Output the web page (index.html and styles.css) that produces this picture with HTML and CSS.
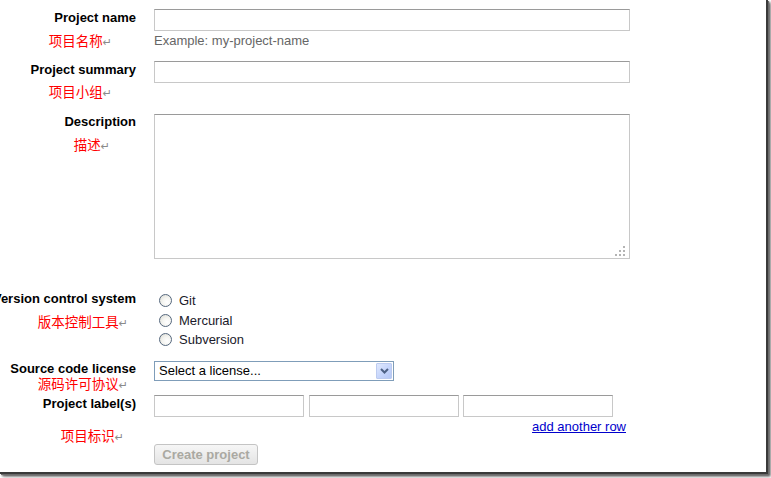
FILE: index.html
```html
<!DOCTYPE html>
<html>
<head>
<meta charset="utf-8">
<link rel="stylesheet" href="styles.css">
</head>
<body>
<div class="frame">
  <form class="form">
    <div class="row row-name">
      <div class="label-cell">
        <span class="label">Project name</span>
        <span class="note note-r24 note-t7">项目名称<span class="mark">↵</span></span>
      </div>
      <div class="field-cell">
        <input class="text wide" type="text">
        <div class="hint">Example: my-project-name</div>
      </div>
    </div>

    <div class="row row-summary">
      <div class="label-cell">
        <span class="label">Project summary</span>
        <span class="note note-r24 note-t6">项目小组<span class="mark">↵</span></span>
      </div>
      <div class="field-cell">
        <input class="text wide" type="text">
      </div>
    </div>

    <div class="row row-desc">
      <div class="label-cell">
        <span class="label label-flush">Description</span>
        <span class="note note-r26 note-t7">描述<span class="mark">↵</span></span>
      </div>
      <div class="field-cell">
        <div class="area-wrap">
          <textarea class="area"></textarea>
          <svg class="grip" width="11" height="11" viewBox="0 0 11 11">
            <rect x="8" y="0" width="2" height="2" fill="#b4b4b4"/>
            <rect x="4" y="4" width="2" height="2" fill="#b4b4b4"/>
            <rect x="8" y="4" width="2" height="2" fill="#b4b4b4"/>
            <rect x="0" y="8" width="2" height="2" fill="#b4b4b4"/>
            <rect x="4" y="8" width="2" height="2" fill="#b4b4b4"/>
            <rect x="8" y="8" width="2" height="2" fill="#b4b4b4"/>
          </svg>
        </div>
      </div>
    </div>

    <div class="row row-vcs">
      <div class="label-cell">
        <span class="label">Version control system</span>
        <span class="note note-r8 note-t7">版本控制工具<span class="mark">↵</span></span>
      </div>
      <div class="field-cell">
        <label class="radio-line"><input class="radio" type="radio" name="vcs"><span>Git</span></label>
        <label class="radio-line"><input class="radio" type="radio" name="vcs"><span>Mercurial</span></label>
        <label class="radio-line"><input class="radio" type="radio" name="vcs"><span>Subversion</span></label>
      </div>
    </div>

    <div class="row row-license">
      <div class="label-cell">
        <span class="label label-flush">Source code license</span>
        <span class="note note-r8 note-tm1">源码许可协议<span class="mark">↵</span></span>
      </div>
      <div class="field-cell">
        <div class="select-wrap">
          <select class="select"><option>Select a license...</option></select>
          <span class="select-btn">
            <svg width="9" height="6" viewBox="0 0 9 6"><path d="M1 1 L4.5 4.5 L8 1" fill="none" stroke="#4d6185" stroke-width="2"/></svg>
          </span>
        </div>
      </div>
    </div>

    <div class="row row-labels">
      <div class="label-cell">
        <span class="label">Project label(s)</span>
        <span class="note note-r12 note-t16">项目标识<span class="mark">↵</span></span>
      </div>
      <div class="field-cell">
        <div class="label-inputs">
          <input class="text small" type="text">
          <input class="text small" type="text">
          <input class="text small" type="text">
        </div>
        <div class="add-row"><a href="#" class="link">add another row</a></div>
      </div>
    </div>

    <div class="row row-submit">
      <div class="label-cell"></div>
      <div class="field-cell">
        <button class="button" type="button" disabled>Create project</button>
      </div>
    </div>
  </form>
</div>
</body>
</html>
```

FILE: styles.css
```css
html, body {
  margin: 0;
  padding: 0;
  background: #ffffff;
  overflow: hidden;
}

body {
  width: 771px;
  height: 478px;
  font-family: "Liberation Sans", Arial, sans-serif;
  font-size: 13px;
  color: #000;
}

.frame {
  box-sizing: border-box;
  width: 768px;
  height: 474px;
  background: #fff;
  border-right: 2px solid #3a3a3a;
  border-bottom: 2px solid #3a3a3a;
  box-shadow: 1px 1px 0 #6a6a6a, 2px 2px 2px rgba(0, 0, 0, 0.55), 3px 3px 3px rgba(0, 0, 0, 0.3);
  overflow: hidden;
}

.form {
  margin: 0;
  padding-top: 9px;
}

.row {
  display: flex;
  align-items: flex-start;
}

.label-cell {
  flex: none;
  width: 136px;
  display: flex;
  flex-direction: column;
  align-items: flex-end;
}

.field-cell {
  padding-left: 18px;
}

.label {
  font-weight: bold;
  font-size: 13px;
  line-height: 15px;
  padding-top: 1px;
  white-space: nowrap;
}

.label-flush {
  padding-top: 0;
}

.note {
  font-family: "Noto Sans CJK SC", "Liberation Sans", sans-serif;
  color: #ff0000;
  font-size: 13.5px;
  line-height: 16px;
  height: 16px;
  white-space: nowrap;
}

.mark {
  font-family: "DejaVu Sans", sans-serif;
  color: #8a8a8a;
  font-size: 11px;
  margin-left: 0;
}

.note-r24 { margin-right: 24px; }
.note-r26 { margin-right: 26px; }
.note-r8 { margin-right: 8px; }
.note-r12 { margin-right: 12px; }

.note-t7 { margin-top: 7px; }
.note-t6 { margin-top: 6px; }
.note-tm1 { margin-top: -1px; }
.note-t16 { margin-top: 16px; }

.row-summary { margin-top: 13px; }
.row-desc { margin-top: 15px; }
.row-vcs { margin-top: 31px; }
.row-license { margin-top: 11.5px; }
.row-labels { margin-top: 4px; }
.row-submit { margin-top: 1px; }

.text {
  display: block;
  box-sizing: border-box;
  height: 22px;
  margin: 0;
  padding: 2px 3px;
  border: 1px solid #c8c8c8;
  border-top-color: #9a9a9a;
  background: #fff;
  font: 13px "Liberation Sans", Arial, sans-serif;
  outline: none;
}

.wide {
  width: 476px;
}

.hint {
  margin-top: 2px;
  line-height: 15px;
  color: #666666;
  white-space: nowrap;
}

.area-wrap {
  position: relative;
  width: 476px;
  height: 145px;
}

.area {
  display: block;
  box-sizing: border-box;
  width: 476px;
  height: 145px;
  margin: 0;
  padding: 2px;
  border: 1px solid #c8c8c8;
  border-top-color: #9a9a9a;
  resize: none;
  outline: none;
  font: 13px "Liberation Sans", Arial, sans-serif;
}

.grip {
  position: absolute;
  right: 4px;
  bottom: 2px;
}

.radio-line {
  display: flex;
  align-items: center;
  height: 19.5px;
  line-height: 15px;
  color: #1a1a2a;
}

.radio-line:first-child {
  padding-top: 1px;
}

.radio {
  appearance: none;
  -webkit-appearance: none;
  box-sizing: border-box;
  width: 13px;
  height: 13px;
  margin: 0 7px 0 5px;
  border: 1px solid #55677d;
  border-radius: 50%;
  background: radial-gradient(circle at 65% 65%, #ffffff 0%, #f4f4f0 45%, #d8d8d0 100%);
}

.select-wrap {
  position: relative;
  width: 240px;
  height: 20px;
}

.select {
  appearance: none;
  -webkit-appearance: none;
  display: block;
  box-sizing: border-box;
  width: 240px;
  height: 20px;
  margin: 0;
  padding: 0 20px 0 4px;
  border: 1px solid #7f9db9;
  border-radius: 0;
  background: #fff;
  color: #000;
  font: 13px "Liberation Sans", Arial, sans-serif;
  line-height: 18px;
  outline: none;
}

.select-btn {
  position: absolute;
  top: 2px;
  right: 2px;
  box-sizing: border-box;
  width: 16px;
  height: 16px;
  border: 1px solid #bccbf0;
  border-radius: 1px;
  background: linear-gradient(135deg, #dfe8fd 0%, #c3d3fb 60%, #b6c8f6 100%);
  display: flex;
  align-items: center;
  justify-content: center;
  pointer-events: none;
}

.label-inputs {
  display: flex;
  gap: 4.5px;
}

.small {
  width: 150px;
}

.add-row {
  width: 472px;
  margin-top: 2px;
  line-height: 15px;
  text-align: right;
}

.link {
  color: #0000cc;
  text-decoration: underline;
}

.button {
  box-sizing: border-box;
  width: 104px;
  height: 21px;
  margin: 0;
  padding: 0;
  border: 1px solid #c4c4c4;
  border-radius: 3px;
  background: linear-gradient(#f6f6f6, #e4e4e4);
  color: #aaa9a2;
  font: bold 13px "Liberation Sans", Arial, sans-serif;
  line-height: 19px;
}
```
